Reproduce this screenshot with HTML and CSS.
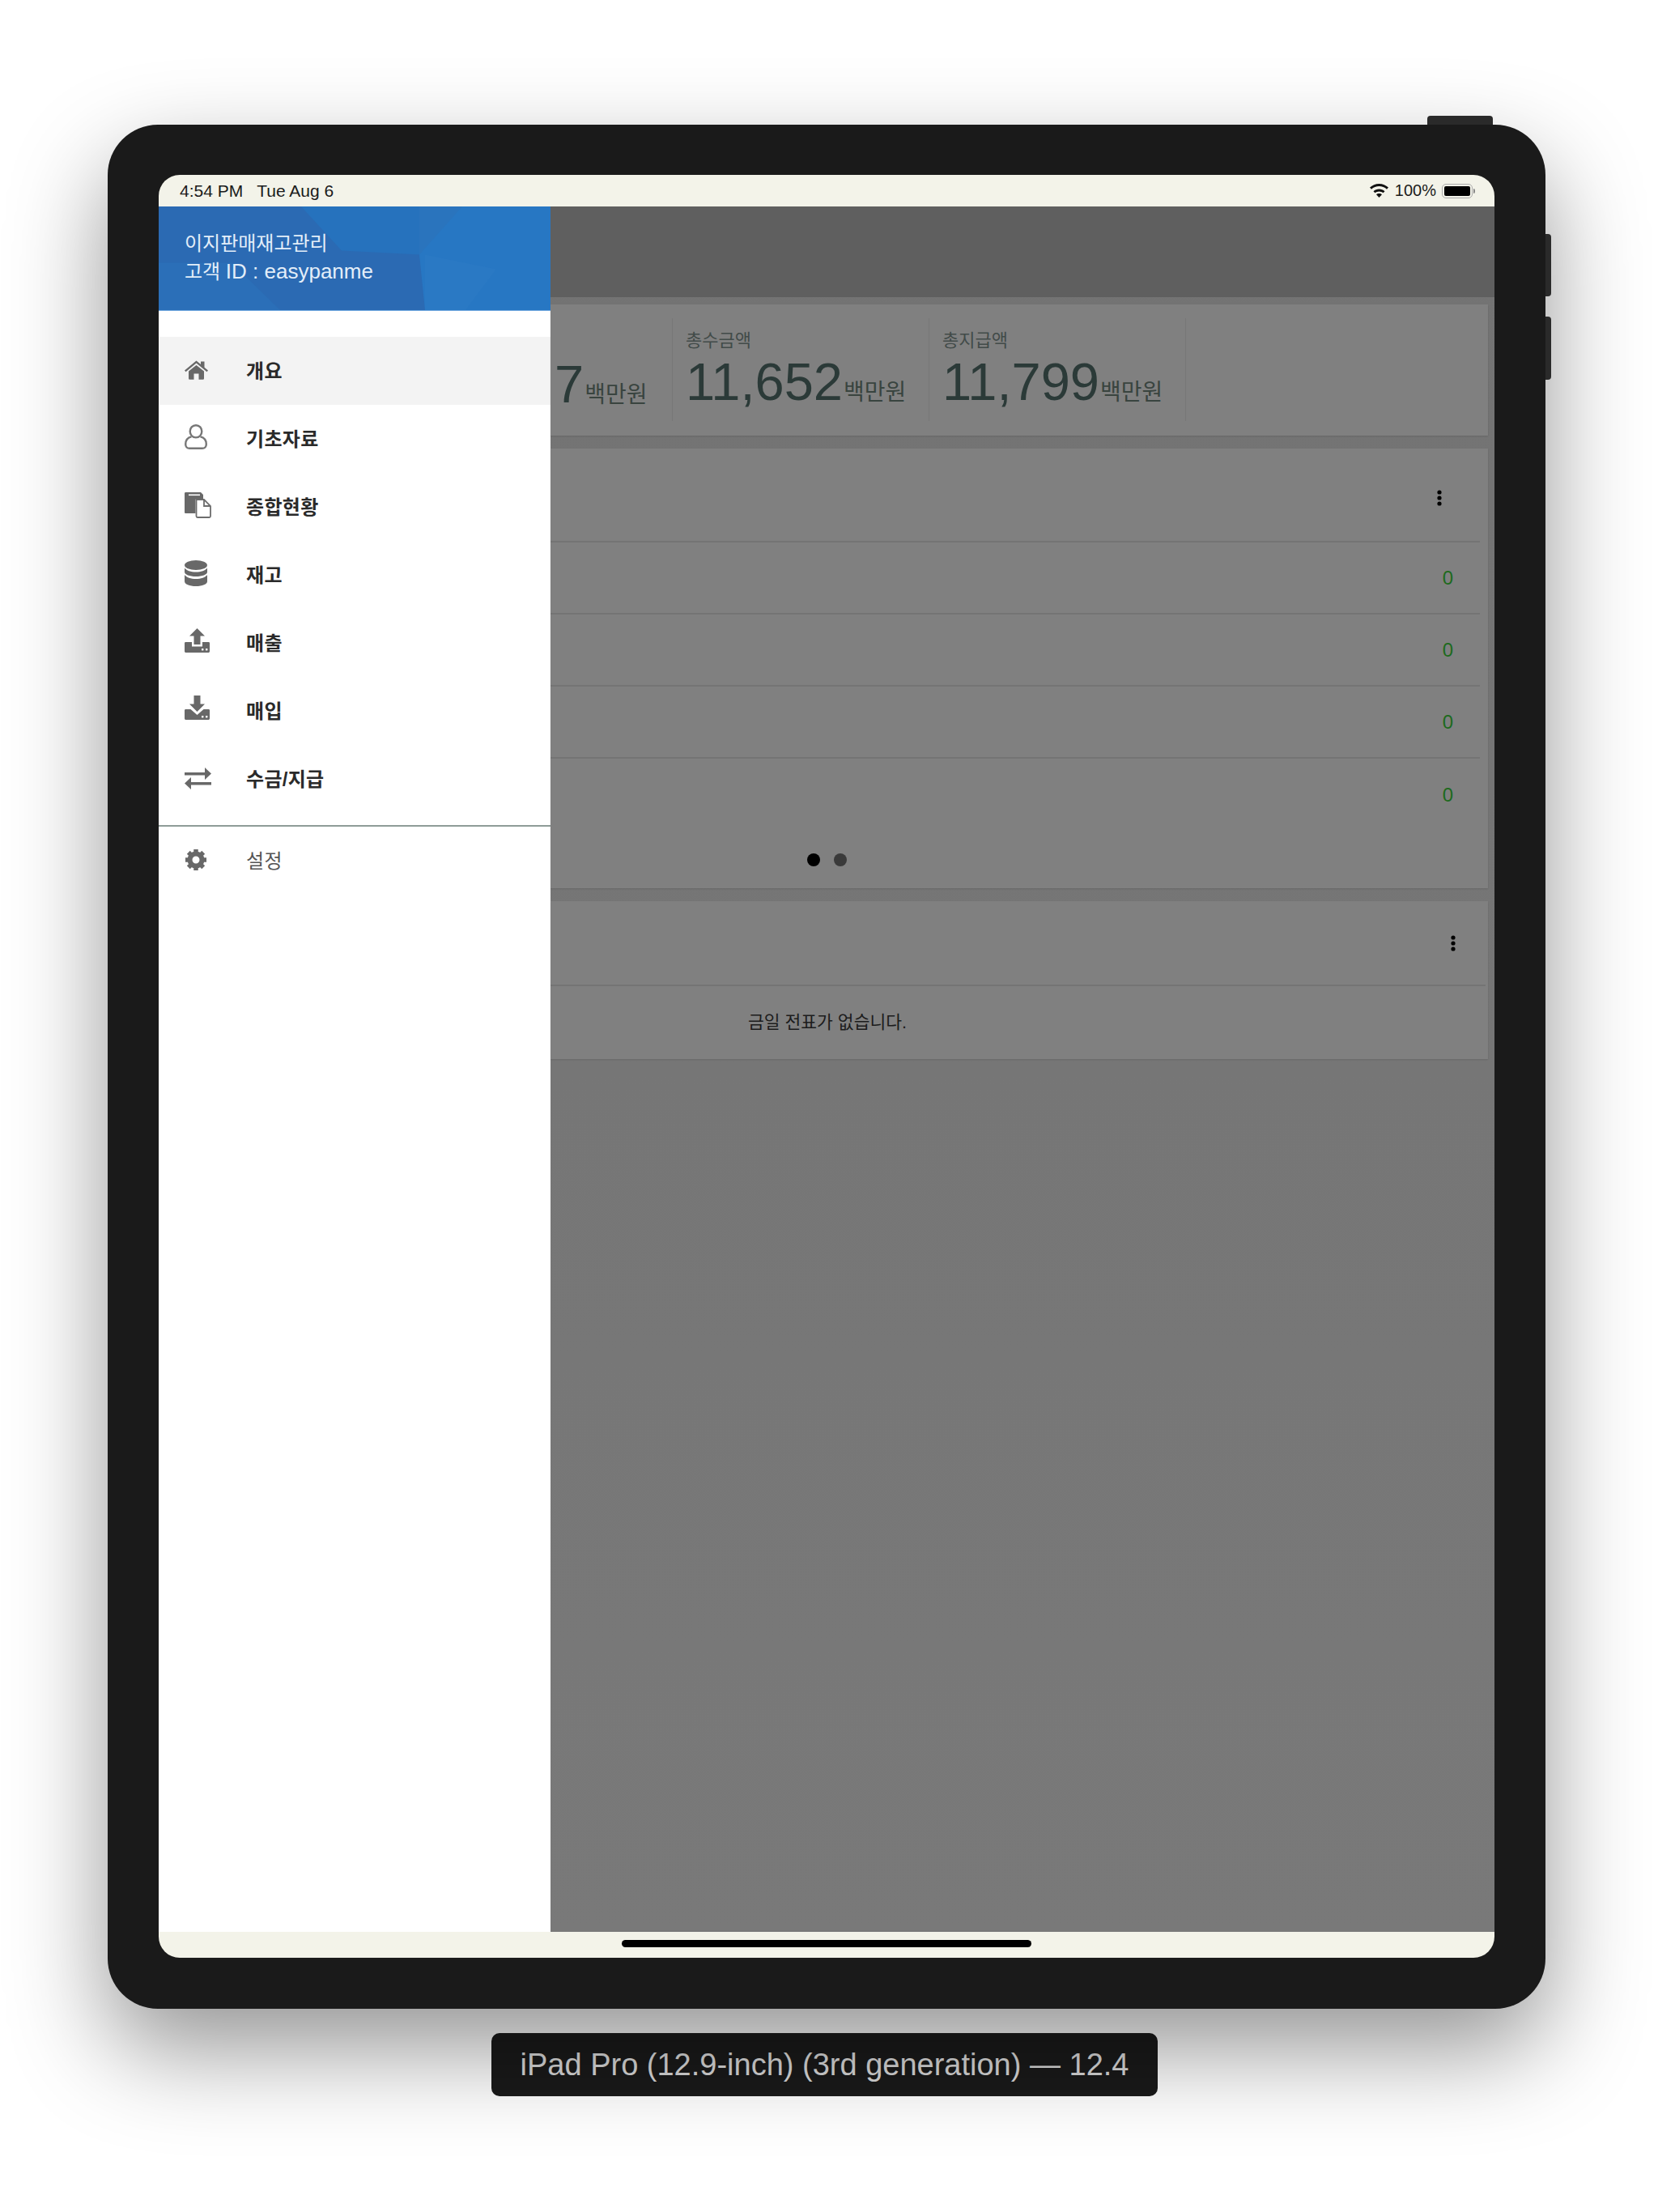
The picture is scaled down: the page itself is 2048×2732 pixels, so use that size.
FILE: index.html
```html
<!DOCTYPE html>
<html lang="ko">
<head>
<meta charset="utf-8">
<title>iPad Pro</title>
<link rel="stylesheet" href="styles.css">
</head>
<body>
<div class="stage">
  <div class="device">
    <span class="btn btn-top"></span>
    <span class="btn btn-vol1"></span>
    <span class="btn btn-vol2"></span>
    <div class="screen">
      <div class="status">
        <div class="status-left"><span>4:54 PM</span><span>Tue Aug 6</span></div>
        <div class="status-right">
          <svg class="wifi" width="23" height="17" viewBox="0 0 23 17"><path d="M11.5 0C7 0 3.2 1.7 0 4.6l2 2.1C4.6 4.300 7.900 3 11.500 3s6.900 1.300 9.500 3.700l2-2.100C19.800 1.700 16 0 11.500 0zM4.500 9.200l2 2.100c1.300-1.200 3.100-1.900 5-1.900s3.700 .7 5 1.900l2-2.100c-1.900-1.800-4.300-2.800-7-2.800s-5.100 1-7 2.800zM8 13.200l3.500 3.800 3.500-3.800c-.9-.8-2.100-1.300-3.500-1.300s-2.600 .5-3.500 1.300z"/></svg>
          <span>100%</span>
          <span class="battery"><span class="battery-fill"></span></span>
          <span class="battery-cap"></span>
        </div>
      </div>
      <div class="app">
        <aside class="drawer">
          <header class="drawer-head">
            <svg class="facets" viewBox="0 0 484 129" preserveAspectRatio="none">
              <polygon points="176,0 322,0 322,60 226,55" fill="#2672bd"/>
              <polygon points="322,0 484,0 484,129 329,129 322,60" fill="#2777c3"/>
              <polygon points="329,60 417,78 379,129 329,129" fill="#2a79c4"/>
              <polygon points="322,0 375,0 322,60" fill="#2a74bd"/>
              <polygon points="0,70 90,70 150,129 0,129" fill="#2b6fb8"/>
            </svg>
            <p class="head-line">이지판매재고관리</p>
            <p class="head-line">고객 <span class="latin">ID : easypanme</span></p>
          </header>
          <nav class="menu">
            <a class="item active">
              <span class="ico"><svg width="29" height="24" viewBox="0 0 29 24"><path d="M5 13.500 14.500 6 24 13.500V22.500a1.200 1.200 0 0 1-1.200 1.200H17.500V16.500H11.500V23.700H6.200A1.200 1.200 0 0 1 5 22.500z"/><path d="M0 12.500 14.500 .5 20 5V1.500H24.500V8.700L29 12.500 27.500 14.300 14.500 3.500 1.500 14.300z"/></svg></span>
              <span class="item-text">개요</span>
            </a>
            <a class="item">
              <span class="ico ic-more"><svg width="28" height="31" viewBox="0 0 28 31"><path class="line" d="M14 1.200c-4.200 0-7.300 3.300-7.300 7.600s3.100 7.600 7.300 7.600 7.300-3.300 7.300-7.600-3.100-7.600-7.300-7.600z"/><path class="line" d="M8.500 15.300C4 16.300 1.200 20 1.200 24.700c0 3 2 5.100 5 5.100h15.600c3 0 5-2.100 5-5.100 0-4.700-2.800-8.400-7.300-9.400"/></svg></span>
              <span class="item-text">기초자료</span>
            </a>
            <a class="item">
              <span class="ico ic-lift"><svg width="33" height="32" viewBox="0 0 33 32"><path d="M1.500 0H20l3 3V8H15c-1 0-1.500.5-1.500 1.500V26H1.500C.5 26 0 25.500 0 24.500V1.500C0 .5.5 0 1.500 0z"/><rect x="5" y="2.500" width="14" height="1.600" fill="#fff"/><path class="line thin" d="M14.500 9H24l8 8V29.500C32 30.500 31.500 31 30.500 31H16C15 31 14.500 30.500 14.500 29.500zM24 9V17H32"/></svg></span>
              <span class="item-text">종합현황</span>
            </a>
            <a class="item">
              <span class="ico ic-lift"><svg width="28" height="32" viewBox="0 0 28 32"><ellipse cx="14" cy="6" rx="14" ry="6"/><path d="M0 9.500C2 12.500 8 14.500 14 14.500S26 12.500 28 9.500V14.500C28 17.500 22 20 14 20S0 17.500 0 14.500z"/><path d="M0 18C2 21 8 23 14 23S26 21 28 18V26C28 29.500 22 32 14 32S0 29.500 0 26z"/></svg></span>
              <span class="item-text">재고</span>
            </a>
            <a class="item">
              <span class="ico ic-more"><svg width="31" height="30" viewBox="0 0 31 30"><path d="M15.500 0 25 9.500H19.500V20H11.500V9.500H6z"/><path d="M1.500 17H9V22.500H22V17H29.500C30.500 17 31 17.500 31 18.500V28C31 29.500 30.500 30 29 30H2C.5 30 0 29.500 0 28V18.500C0 17.500.5 17 1.500 17z"/><rect x="21" y="25" width="2.400" height="2.400" fill="#fff"/><rect x="26" y="25" width="2.400" height="2.400" fill="#fff"/></svg></span>
              <span class="item-text">매출</span>
            </a>
            <a class="item">
              <span class="ico ic-most"><svg width="31" height="30" viewBox="0 0 31 30"><path d="M11.500 0H19.500V10.500H25L15.500 20 6 10.500H11.500z"/><path d="M1.500 17H7.500L15.500 24 23.500 17H29.500C30.500 17 31 17.500 31 18.500V28C31 29.500 30.500 30 29 30H2C.5 30 0 29.500 0 28V18.500C0 17.500.5 17 1.500 17z"/><rect x="21" y="25" width="2.400" height="2.400" fill="#fff"/><rect x="26" y="25" width="2.400" height="2.400" fill="#fff"/></svg></span>
              <span class="item-text">매입</span>
            </a>
            <a class="item">
              <span class="ico"><svg width="33" height="27" viewBox="0 0 33 27"><path d="M0 6H25V0L33 7.500 25 15V9.500H0z"/><path d="M33 18H8V12L0 19.500 8 27V21.500H33z"/></svg></span>
              <span class="item-text">수금/지급</span>
            </a>
          </nav>
          <div class="menu-foot">
            <a class="item plain">
              <span class="ico"><svg width="28" height="28" viewBox="0 0 28 28"><circle cx="14" cy="14" r="7.500" class="ring"/><path class="teeth" d="M14 1V6M14 22V27M1 14H6M22 14H27M4.800 4.800 8.300 8.300M19.700 19.700 23.200 23.200M23.200 4.800 19.700 8.300M8.300 19.700 4.800 23.200"/></svg></span>
              <span class="item-text">설정</span>
            </a>
          </div>
        </aside>
        <main class="main">
          <div class="topbar"></div>
          <section class="card stats">
            <div class="stat stat-clip">
              <div class="stat-num"><b>7</b><span>백만원</span></div>
            </div>
            <div class="stat">
              <div class="stat-label">총수금액</div>
              <div class="stat-num"><b>11,652</b><span>백만원</span></div>
            </div>
            <div class="stat">
              <div class="stat-label">총지급액</div>
              <div class="stat-num"><b>11,799</b><span>백만원</span></div>
            </div>
          </section>
          <section class="card panel">
            <div class="panel-head">
              <svg class="kebab" width="6" height="20" viewBox="0 0 6 20"><circle cx="3" cy="3" r="2.600"/><circle cx="3" cy="10" r="2.600"/><circle cx="3" cy="17" r="2.600"/></svg>
            </div>
            <div class="row">0</div>
            <div class="row">0</div>
            <div class="row">0</div>
            <div class="row last">0</div>
            <div class="pager"><span class="dot on"></span><span class="dot"></span></div>
          </section>
          <section class="card slips">
            <div class="slips-head">
              <svg class="kebab" width="6" height="20" viewBox="0 0 6 20"><circle cx="3" cy="3" r="2.600"/><circle cx="3" cy="10" r="2.600"/><circle cx="3" cy="17" r="2.600"/></svg>
            </div>
            <div class="slips-body">금일 전표가 없습니다.</div>
          </section>
        </main>
      </div>
      <div class="homebar"><span class="home-ind"></span></div>
    </div>
  </div>
  <div class="caption">iPad Pro (12.9-inch) (3rd generation) — 12.4</div>
</div>
</body>
</html>
```
FILE: styles.css
```css
* { box-sizing: border-box; }
html, body { margin: 0; padding: 0; background: #fff; }
body {
  width: 2048px;
  height: 2732px;
  overflow: hidden;
  font-family: "Liberation Sans", "Noto Sans CJK KR", sans-serif;
}
p { margin: 0; }

.stage {
  display: flex;
  flex-direction: column;
  align-items: center;
  padding: 154px 139px 0 133px;
}
.device {
  position: relative;
  width: 1776px;
  height: 2327px;
  padding: 62px 63px;
  background: #1a1a1a;
  border-radius: 62px;
  box-shadow: 0 50px 120px rgba(0, 0, 0, .42);
}
.btn { position: absolute; background: #2a2a2a; }
.btn-top { top: -11px; right: 65px; width: 81px; height: 11px; border-radius: 4px 4px 0 0; }
.btn-vol1 { top: 135px; right: -7px; width: 7px; height: 77px; border-radius: 0 4px 4px 0; }
.btn-vol2 { top: 237px; right: -7px; width: 7px; height: 78px; border-radius: 0 4px 4px 0; }

.screen {
  display: flex;
  flex-direction: column;
  width: 1650px;
  height: 2202px;
  border-radius: 26px;
  overflow: hidden;
  background: #f3f3e9;
}

/* status bar */
.status {
  flex: 0 0 39px;
  display: flex;
  align-items: center;
  justify-content: space-between;
  padding: 0 24px 0 26px;
  font-size: 21px;
  color: #1b1b1b;
}
.status-left { display: flex; gap: 17px; }
.status-right { display: flex; align-items: center; font-size: 20px; }
.wifi { margin-right: 8px; fill: #111; }
.battery {
  display: flex;
  width: 38px;
  height: 18px;
  margin-left: 7px;
  padding: 2px;
  border: 1px solid #aaa;
  border-radius: 5px;
}
.battery-fill { flex: 1; background: #000; border-radius: 2px; }
.battery-cap { width: 2px; height: 6px; margin-left: 1px; background: #888; border-radius: 0 2px 2px 0; }

/* app area */
.app { flex: 1; display: flex; min-height: 0; }
.drawer {
  flex: 0 0 484px;
  display: flex;
  flex-direction: column;
  background: #fff;
}
.drawer-head {
  position: relative;
  flex: 0 0 129px;
  padding: 28px 32px 0;
  background: #2b6ab3;
  border-bottom: 1px solid #6ea6de;
  overflow: hidden;
}
.facets { position: absolute; inset: 0; width: 100%; height: 100%; }
.head-line {
  position: relative;
  font-size: 24px;
  line-height: 35px;
  color: #e3eef9;
}
.latin { font-size: 26px; }
.menu { margin-top: 32px; padding-bottom: 15px; border-bottom: 2px solid #8e9c98; }
.item {
  display: flex;
  align-items: center;
  height: 84px;
  padding-left: 32px;
  font-size: 24px;
  font-weight: 700;
  color: #2a2a2a;
}
.item-text { padding-bottom: 3px; letter-spacing: .3px; }
.item.active { background: #f3f3f3; }
.item.plain { font-weight: 400; color: #555; }
.ico { flex: 0 0 76px; display: flex; align-items: center; margin-top: -2px; }
.ico svg { fill: #686868; display: block; }
.ic-lift { margin-top: -4px; }
.ic-more { margin-top: -6px; }
.ic-most { margin-top: -8px; }
.line { fill: none; stroke: #777; stroke-width: 2.400; }
.line.thin { stroke-width: 1.800; fill: #fff; stroke: #6d6d6d; }
.ring { fill: none; stroke: #686868; stroke-width: 6; }
.teeth { fill: none; stroke: #686868; stroke-width: 5.500; }

/* main behind scrim */
.main {
  flex: 1;
  min-width: 0;
  padding-right: 8px;
  background: linear-gradient(180deg, #737373 0%, #797979 100%);
}
.topbar { height: 112px; margin: 0 -8px 9px 0; background: #5f5f5f; }
.card {
  background: #808080;
  box-shadow: 0 1px 2px rgba(0, 0, 0, .12);
}
.stats {
  display: flex;
  height: 162px;
  padding-top: 17px;
  margin-bottom: 16px;
}
.stat {
  flex: 0 0 317px;
  height: 127px;
  padding: 14px 0 0 16px;
  border-right: 1px solid #777;
}
.stat-clip { flex: 0 0 151px; padding: 45px 0 0 5px; }
.stat-label { font-size: 22px; line-height: 28px; color: #424b49; }
.stat-num { display: flex; align-items: baseline; height: 68px; line-height: 74px; color: #2b3a38; }
.stat-num b { font-size: 65px; font-weight: 400; }
.stat-num span { font-size: 28px; margin-left: 1px; color: #39443f; }

.panel { height: 543px; margin-bottom: 16px; }
.panel-head {
  display: flex;
  align-items: center;
  justify-content: flex-end;
  height: 116px;
  margin-right: 10px;
  padding: 8px 47px 0 0;
  border-bottom: 2px solid #747474;
}
.row {
  display: flex;
  align-items: center;
  justify-content: flex-end;
  height: 89px;
  margin-right: 10px;
  padding-right: 33px;
  font-size: 24px;
  color: #1d6a1d;
  border-bottom: 2px solid #747474;
}
.row.last { border-bottom: 0; }
.pager { display: flex; gap: 17px; padding: 28px 0 0 317px; }
.dot { width: 16px; height: 16px; border-radius: 50%; background: #3a3a3a; }
.dot.on { background: #000; }
.kebab { fill: #000; }

.slips { height: 195px; }
.slips-head {
  display: flex;
  align-items: center;
  justify-content: flex-end;
  height: 105px;
  margin-right: 3px;
  padding-right: 37px;
  border-bottom: 2px solid #747474;
}
.slips-body {
  display: flex;
  align-items: center;
  height: 85px;
  padding-left: 244px;
  font-size: 21.500px;
  color: #1c1c1c;
}

.homebar {
  flex: 0 0 32px;
  display: flex;
  align-items: center;
  justify-content: center;
  padding-bottom: 3px;
}
.home-ind { width: 506px; height: 9px; background: #000; border-radius: 5px; }

.caption {
  display: flex;
  align-items: center;
  justify-content: center;
  width: 823px;
  height: 78px;
  margin: 30px 5px 0 0;
  background: #1a1a1a;
  border-radius: 10px;
  color: #dcdcdc;
  font-size: 38px;
}
```
